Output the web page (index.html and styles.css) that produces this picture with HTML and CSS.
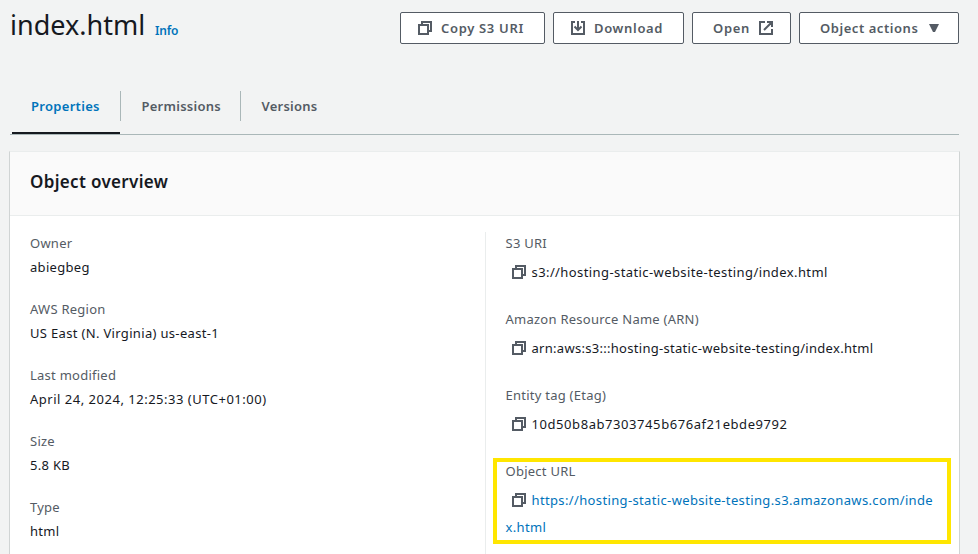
FILE: index.html
```html
<!DOCTYPE html>
<html lang="en">
<head>
<meta charset="utf-8">
<title>index.html</title>
<link rel="stylesheet" href="styles.css">
</head>
<body>
<svg class="defs" width="0" height="0">
  <symbol id="copy" viewBox="0 0 16 16"><path d="M2 5h9v9H2zM5 5V2h9v9h-3"/></symbol>
</svg>
<header class="top">
  <h1>index.html</h1><a class="info">Info</a>
  <div class="actions">
    <button class="btn copy"><svg class="icon"><use href="#copy"/></svg><span>Copy S3 URI</span></button>
    <button class="btn download"><svg class="icon" viewBox="0 0 16 16"><path d="M5 2H2v12h12V2h-3M8 1v9M4.500 6.500L8 10l3.500-3.500"/></svg><span>Download</span></button>
    <button class="btn open"><span>Open</span><svg class="icon" viewBox="0 0 16 16"><path d="M7 2H2v12h12V9M9 2h5v5M14 2L6 10"/></svg></button>
    <button class="btn menu"><span>Object actions</span><svg class="caret" viewBox="0 0 10 8"><path d="M0 0h10L6 8H4z"/></svg></button>
  </div>
</header>
<nav class="tabs">
  <a class="tab active">Properties</a>
  <a class="tab">Permissions</a>
  <a class="tab">Versions</a>
</nav>
<section class="card">
  <h2>Object overview</h2>
  <div class="columns">
    <dl class="left">
      <dt>Owner</dt><dd>abiegbeg</dd>
      <dt>AWS Region</dt><dd class="region">US East (N. Virginia) us-east-1</dd>
      <dt>Last modified</dt><dd class="date">April 24, 2024, 12:25:33 (UTC+01:00)</dd>
      <dt>Size</dt><dd>5.8 KB</dd>
      <dt>Type</dt><dd>html</dd>
    </dl>
    <dl class="right">
      <dt>S3 URI</dt><dd class="uri"><svg class="icon"><use href="#copy"/></svg>s3://hosting-static-website-testing/index.html</dd>
      <dt>Amazon Resource Name (ARN)</dt><dd class="arn"><svg class="icon"><use href="#copy"/></svg>arn:aws:s3:::hosting-static-website-testing/index.html</dd>
      <dt>Entity tag (Etag)</dt><dd class="etag"><svg class="icon"><use href="#copy"/></svg>10d50b8ab7303745b676af21ebde9792</dd>
      <div class="highlight"><dt>Object URL</dt><dd class="url"><svg class="icon"><use href="#copy"/></svg><a>https://hosting-static-website-testing.s3.amazonaws.com/inde<br>x.html</a></dd></div>
    </dl>
  </div>
</section>
</body>
</html>
```
FILE: styles.css
```css
* { box-sizing: border-box; }
body { margin: 0; width: 978px; height: 554px; overflow: hidden; background: #f2f3f3; color: #16191f; font: 13px/22px "Noto Sans", sans-serif; }
.defs { display: block; }
.icon { width: 16px; height: 16px; flex: none; fill: none; stroke: #545b64; stroke-width: 2; }
.top { display: flex; align-items: flex-start; height: 91px; padding: 0 19px 0 10px; }
h1 { margin: 7px 0 0; font-size: 27px; line-height: 36px; font-weight: 400; }
.info { margin: 20px 0 0 10px; font-size: 12px; font-weight: 600; color: #0073bb; letter-spacing: -.2px; }
.actions { display: flex; gap: 8px; margin: 12px 0 0 auto; }
.btn { display: flex; align-items: center; height: 32px; padding: 0 0 0 16px; border: 1px solid #545b64; border-radius: 2px; background: #fff; color: #545b64; font: 600 13px/20px "Noto Sans", sans-serif; letter-spacing: .67px; white-space: nowrap; }
.copy { width: 145px; }
.download { width: 131px; }
.open { width: 99px; padding-left: 20px; }
.menu { width: 160px; padding-left: 20px; letter-spacing: .55px; }
.btn .icon + span { margin-left: 8px; }
.open .icon { margin-left: 8px; }
.caret { width: 10px; height: 8px; margin-left: 11px; fill: #545b64; }
.tabs { display: flex; height: 44px; margin: 0 19px 0 10px; padding-left: 2px; border-bottom: 1px solid #aab7b8; }
.tab { width: 120px; height: 30px; padding: 4px 0 0 20.5px; border-left: 1px solid #aab7b8; font-weight: 600; color: #545b64; letter-spacing: .25px; white-space: nowrap; }
.tab.active { width: 108px; height: 43px; padding-left: 19px; border-left: 0; color: #0073bb; border-bottom: 2px solid #16191f; letter-spacing: .3px; }
.card { height: 420px; margin: 16px 18px 0 9px; border: 1px solid #d0d4d4; border-top-color: #eaeded; background: #fff; }
h2 { margin: 0; height: 64px; padding: 19px 20px 0; border-bottom: 1px solid #eaeded; background: #fafafa; font-size: 17px; font-weight: 600; letter-spacing: .33px; }
.columns { display: flex; padding-top: 16px; }
dl { margin: 0; padding-left: 20px; letter-spacing: .3px; }
.left { width: 475px; }
.right { width: 474px; height: 340px; padding-left: 19.5px; border-left: 1px solid #eaeded; }
dt { color: #545b64; letter-spacing: .25px; }
dd { margin: 2px 0 20px; white-space: nowrap; }
.region { letter-spacing: .33px; }
.date { letter-spacing: .51px; }
.uri { letter-spacing: .41px; }
.arn { letter-spacing: .29px; }
.etag { letter-spacing: .57px; }
.url { letter-spacing: .36px; }
.right dd { margin: 5px 0 22px; line-height: 27px; }
.right .icon { margin: 0 5px 0 5px; vertical-align: -3px; }
.highlight { width: 458px; height: 86px; margin: -2px 0 0 -12.5px; padding: 0 0 0 8.5px; border: 4px solid #ffe600; }
.highlight dt { margin-top: -2px; }
.url a { color: #0073bb; }
```
